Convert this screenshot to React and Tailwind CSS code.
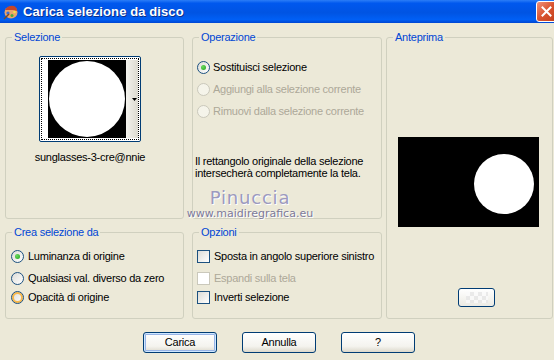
import React from 'react';

const FONT = "font-['Liberation_Sans',Arial,sans-serif]";

function Radio({ checked, disabled, hover }) {
    const border = disabled ? "border-[#CAC8BB]" : "border-[#1C5180]";
    const bg = disabled ? "bg-[#F5F4EA]" : "bg-[linear-gradient(135deg,#DCDCD7,#FFFFFF)]";
    return (
        <div className={`w-[13px] h-[13px] shrink-0 rounded-full border ${border} ${bg} flex items-center justify-center ${hover ? "shadow-[inset_0_0_0_2px_#F8B84A]" : ""}`}>
            {checked && <div className="w-[5px] h-[5px] rounded-full bg-[radial-gradient(circle_at_35%_35%,#6ADB5C,#21A121)]" />}
        </div>
    );
}

function Checkbox({ disabled }) {
    const border = disabled ? "border-[#CAC8BB]" : "border-[#1C5180]";
    const bg = disabled ? "bg-white" : "bg-[linear-gradient(135deg,#DCDCD7,#FFFFFF)]";
    return <div className={`w-[13px] h-[13px] shrink-0 border ${border} ${bg}`} />;
}

function Group({ title, className, children }) {
    return (
        <fieldset className={`border border-[#D0D0BF] rounded-[3px] min-w-0 ${className}`}>
            <legend className="ml-[6px] px-[2px] leading-[14px] text-[#0046D5]">{title}</legend>
            {children}
        </fieldset>
    );
}

function Button({ children, isDefault }) {
    return (
        <button className={`w-[74px] h-[21px] rounded-[3px] border border-[#003C74] bg-[linear-gradient(180deg,#FFFFFF_0%,#F4F3EE_70%,#DCD8CB_100%)] text-[11px] leading-[19px] text-black ${isDefault ? "shadow-[inset_0_0_0_1px_#CEE7FF,inset_0_0_0_2px_#98B4E6]" : ""}`}>
            {children}
        </button>
    );
}

export default function App() {
    return (
        <div className={`w-[554px] h-[360px] overflow-hidden bg-[#ECE9D8] text-[11px] tracking-[-0.25px] text-black whitespace-nowrap ${FONT}`}>
            {/* title bar */}
            <div className="relative h-[23px] flex items-center bg-[linear-gradient(180deg,#2B7DF7_0%,#0058EE_14%,#0054E3_55%,#005FF5_85%,#0046D2_100%)]">
                <svg width="16" height="16" viewBox="0 0 16 16" className="ml-[3px] mt-[1px]">
                    <ellipse cx="8" cy="8.5" rx="6.5" ry="6" fill="#E9A46B" />
                    <path d="M2 6 Q5 1 11 2 Q14 3 14 7 L10 6 Z" fill="#C4452A" />
                    <circle cx="5" cy="9" r="1.6" fill="#3A6FD8" />
                    <circle cx="9" cy="11.5" r="1.5" fill="#4BAA3C" />
                    <circle cx="11.5" cy="8" r="1.3" fill="#F2E04A" />
                    <path d="M1 15 L6 10" stroke="#7A4A22" strokeWidth="1.5" />
                </svg>
                <span className="ml-[4px] text-[13px] font-bold tracking-[0.1px] text-white [text-shadow:1px_1px_0_#0A2F8A]">Carica selezione da disco</span>
                <div className="absolute left-[536px] top-[1px] w-[21px] h-[21px] rounded-[3px] border border-white bg-[linear-gradient(135deg,#F0917A,#D9532F_50%,#C2401C)] flex items-center justify-center">
                    <svg width="11" height="11" viewBox="0 0 11 11">
                        <path d="M1.5 1.5 L9.5 9.5 M9.5 1.5 L1.5 9.5" stroke="white" strokeWidth="2" strokeLinecap="square" />
                    </svg>
                </div>
            </div>

            {/* body */}
            <div className="relative pt-[7px] pl-[5px]">
                <div className="grid grid-cols-[187px_194px_167px] grid-rows-[189px_94px] gap-y-[6px]">
                    <Group title="Selezione" className="w-[179px] h-full">
                        <div className="ml-[28px] mt-[12px] w-[112px] flex flex-col items-center">
                            <div className="w-[102px] h-[86px] rounded-[2px] border border-[#003C74] bg-white p-[1px]">
                                <div className="w-full h-full border border-dotted border-black flex items-center pl-[6px]">
                                    <svg width="78" height="78" viewBox="0 0 78 78">
                                        <rect width="78" height="78" fill="#000" />
                                        <circle cx="39" cy="39" r="38" fill="#fff" />
                                    </svg>
                                    <div className="w-[12px] h-[78px] bg-[linear-gradient(90deg,#F4F3EE,#DCDAD0)] flex items-center justify-end pr-[1px]">
                                        <svg width="5" height="3" viewBox="0 0 5 3"><path d="M0 0 H5 L2.5 3 Z" fill="#000" /></svg>
                                    </div>
                                </div>
                            </div>
                            <div className="mt-[9px] leading-[13px]">sunglasses-3-cre@nnie</div>
                        </div>
                    </Group>

                    <Group title="Operazione" className="w-[190px] h-full">
                        <div className="flex flex-col mt-[17px] gap-[9px] ml-[4px]">
                            <div className="flex items-center gap-[3px] h-[13px]"><Radio checked /><span>Sostituisci selezione</span></div>
                            <div className="flex items-center gap-[3px] h-[13px] text-[#ACA899]"><Radio disabled /><span>Aggiungi alla selezione corrente</span></div>
                            <div className="flex items-center gap-[3px] h-[13px] text-[#ACA899]"><Radio disabled /><span>Rimuovi dalla selezione corrente</span></div>
                        </div>
                        <p className="mt-[37px] ml-[2px] leading-[12px]">Il rettangolo originale della selezione<br />intersecherà completamente la tela.</p>
                    </Group>

                    <Group title="Anteprima" className="w-[167px] h-full row-span-2">
                        <svg width="141" height="90" viewBox="0 0 141 90" className="ml-[11px] mt-[93px] block">
                            <rect width="141" height="90" fill="#000" />
                            <circle cx="106" cy="47" r="30" fill="#fff" />
                        </svg>
                        <div className="ml-[71px] mt-[61px] w-[37px] h-[19px] rounded-[3px] border border-[#003C74] bg-[linear-gradient(180deg,#FFFFFF,#ECEBE4)] flex items-center justify-center">
                            <div className="w-[22px] h-[11px] bg-[conic-gradient(#E6E6E6_25%,#FAFAFA_0_50%,#E6E6E6_0_75%,#FAFAFA_0)] bg-[length:8px_8px] opacity-80" />
                        </div>
                    </Group>

                    <Group title="Crea selezione da" className="w-[179px] h-full">
                        <div className="flex flex-col mt-[11px] ml-[5px]">
                            <div className="flex items-center gap-[4px] h-[13px]"><Radio checked /><span>Luminanza di origine</span></div>
                            <div className="flex items-center gap-[4px] h-[13px] mt-[9px]"><Radio /><span>Qualsiasi val. diverso da zero</span></div>
                            <div className="flex items-center gap-[4px] h-[13px] mt-[6px]"><Radio hover /><span>Opacità di origine</span></div>
                        </div>
                    </Group>

                    <Group title="Opzioni" className="w-[190px] h-full">
                        <div className="flex flex-col mt-[11px] ml-[4px]">
                            <div className="flex items-center gap-[4px] h-[13px]"><Checkbox /><span>Sposta in angolo superiore sinistro</span></div>
                            <div className="flex items-center gap-[4px] h-[13px] mt-[9px] text-[#ACA899]"><Checkbox disabled /><span>Espandi sulla tela</span></div>
                            <div className="flex items-center gap-[4px] h-[13px] mt-[6px]"><Checkbox /><span>Inverti selezione</span></div>
                        </div>
                    </Group>
                </div>

                <div className="flex gap-[25px] ml-[138px] mt-[13px]">
                    <Button isDefault>Carica</Button>
                    <Button>Annulla</Button>
                    <Button>?</Button>
                </div>

                {/* watermark */}
                <div className="absolute left-[175px] top-[165px] w-[150px] flex flex-col items-center gap-[1px] pointer-events-none">
                    <span className="font-['DejaVu_Sans',sans-serif] text-[18px] leading-[19px] tracking-[0.8px] text-[#9C9ABF] [text-shadow:1px_1px_0_#fff]">Pinuccia</span>
                    <span className="font-['DejaVu_Sans',sans-serif] text-[11px] leading-[12px] tracking-normal text-[#7C7A9A] [text-shadow:1px_1px_0_#fff]">www.maidiregrafica.eu</span>
                </div>
            </div>
        </div>
    );
}
